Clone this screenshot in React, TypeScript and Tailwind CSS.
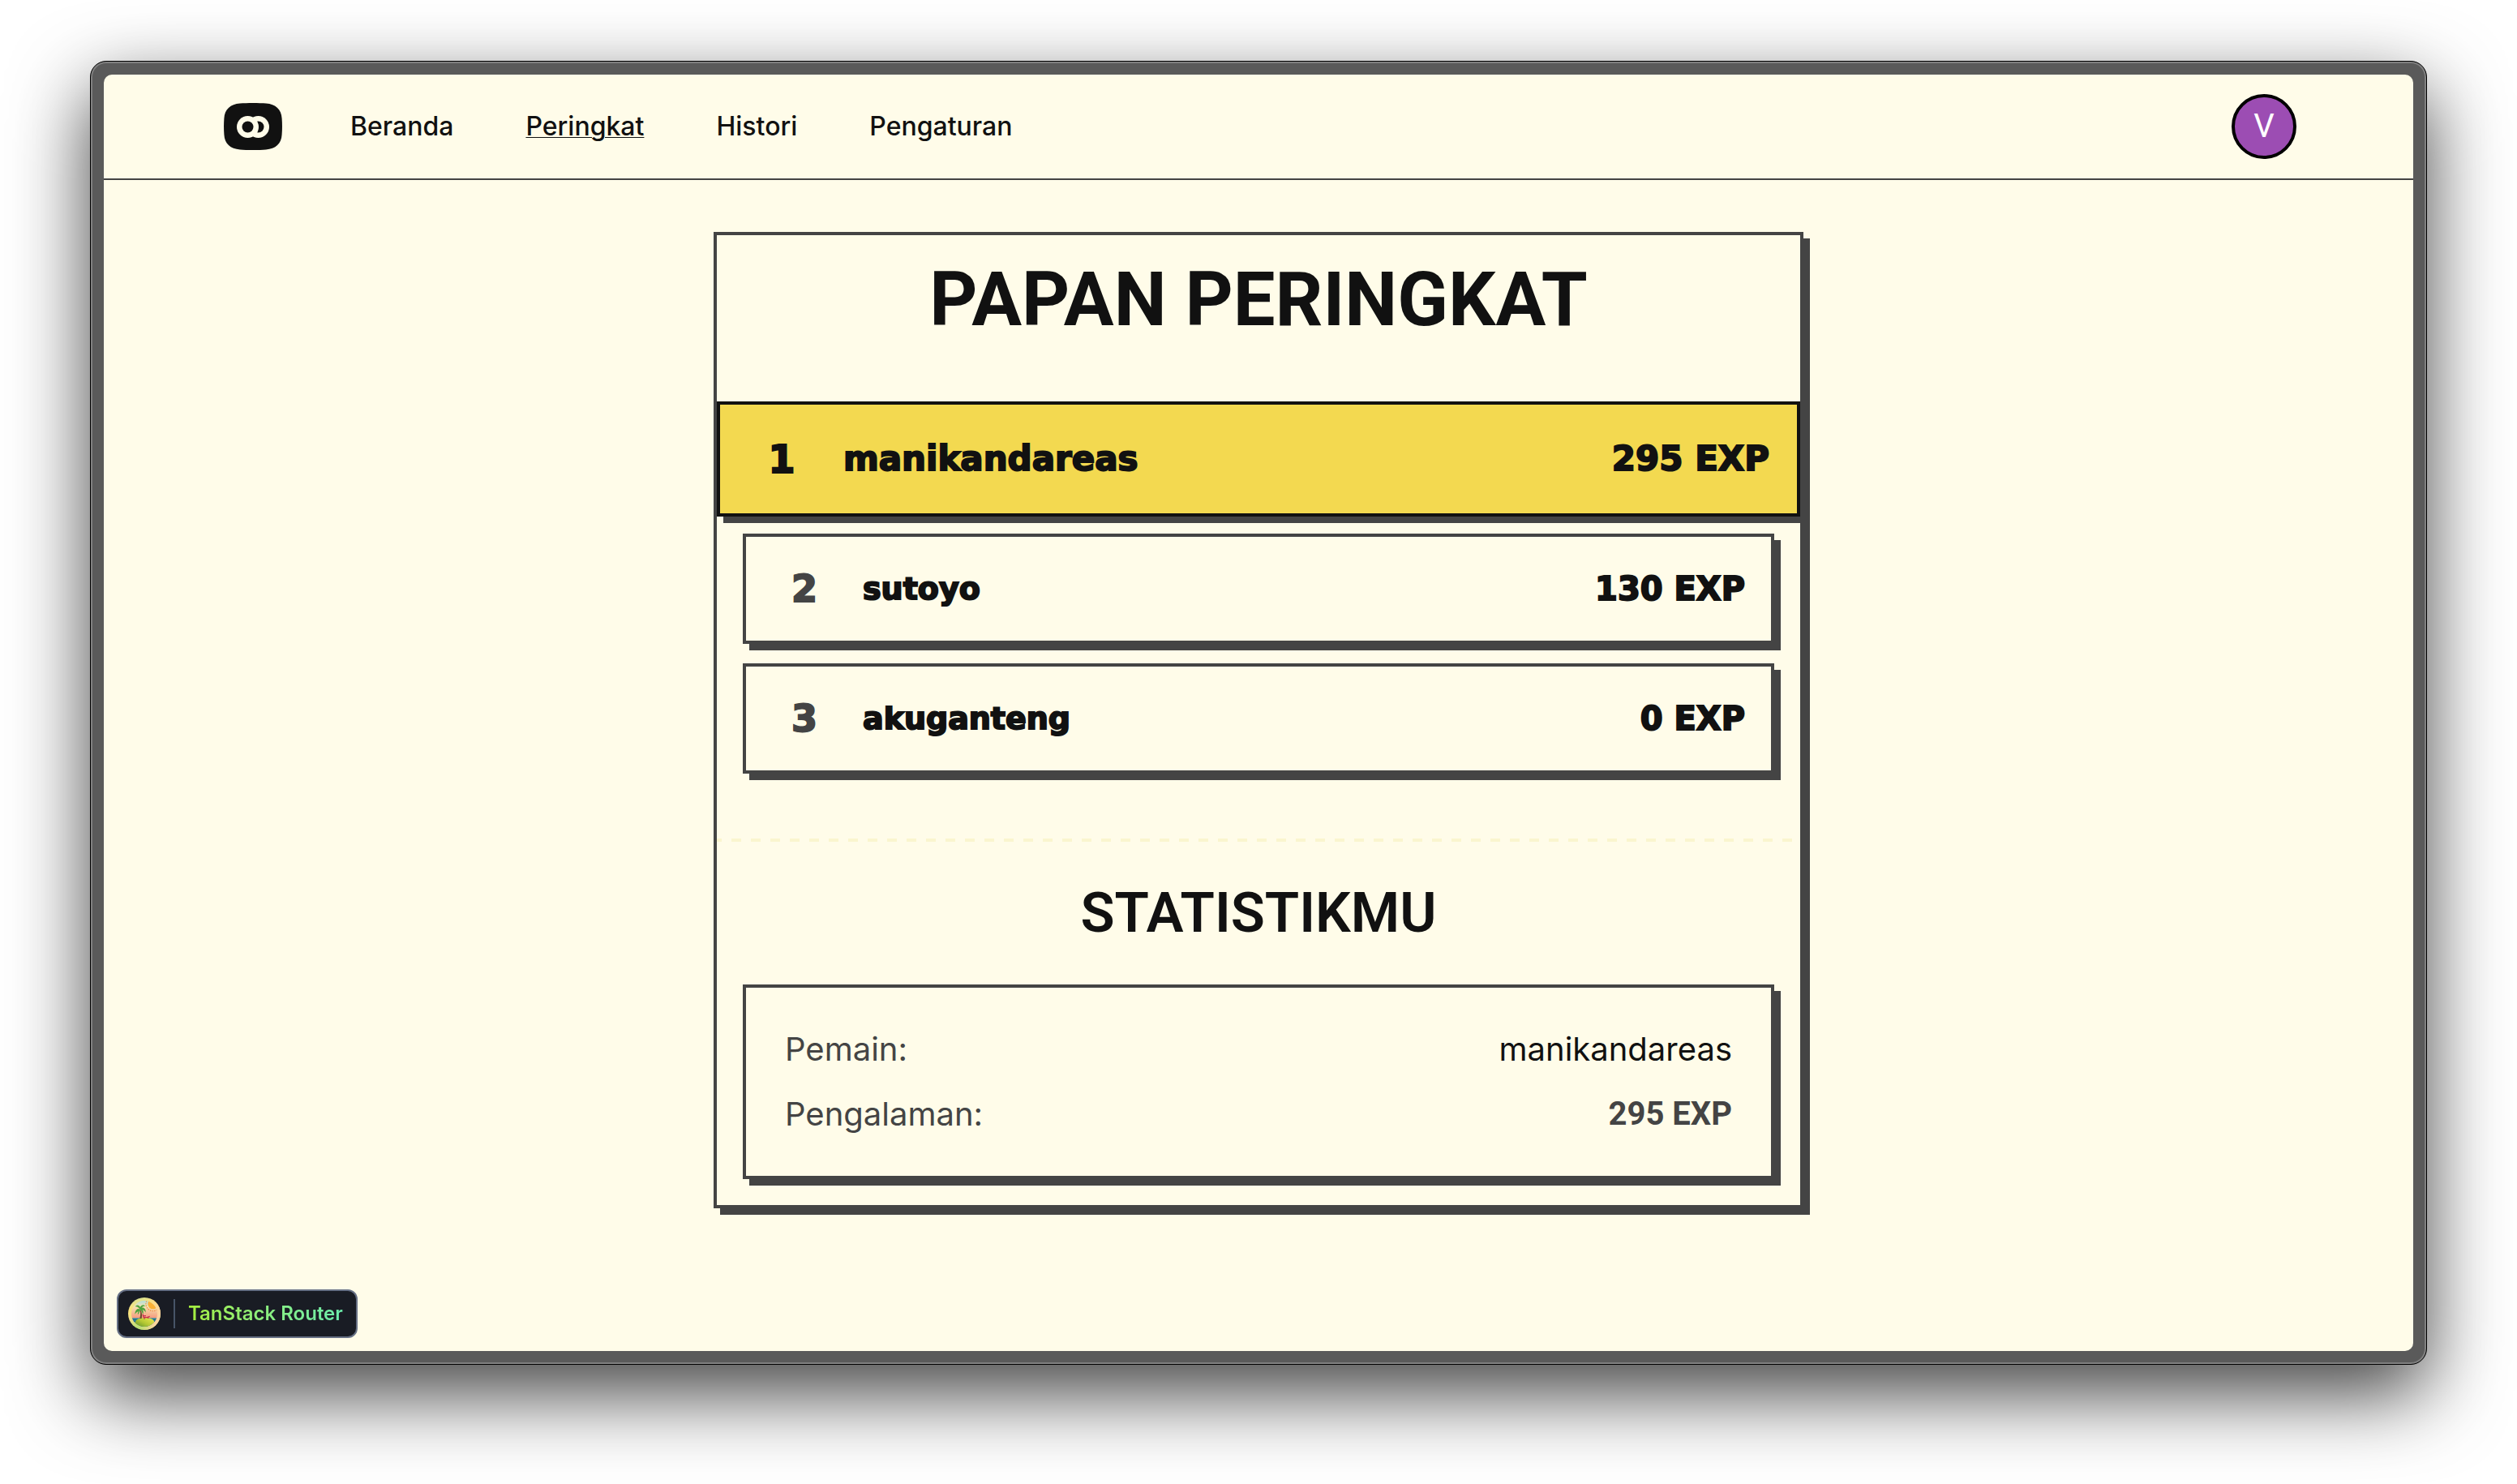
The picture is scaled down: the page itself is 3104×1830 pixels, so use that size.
import React from "react";

const links = [
  { label: "Beranda", active: false },
  { label: "Peringkat", active: true },
  { label: "Histori", active: false },
  { label: "Pengaturan", active: false },
];

const players = [
  { name: "manikandareas", exp: 295 },
  { name: "sutoyo", exp: 130 },
  { name: "akuganteng", exp: 0 },
];

function Logo() {
  return (
    <svg viewBox="0 0 72 58" className="h-[58px] w-[72px]" aria-hidden="true">
      <path
        d="M20 .6C28 -.2 44 -.2 52 .6C64 1.4 71 8 71.6 19C72.1 26 72.1 32 71.6 39C71 50 64 56.6 52 57.4C44 58.2 28 58.2 20 57.4C8 56.6 1 50 .4 39C-.1 32 -.1 26 .4 19C1 8 8 1.4 20 .6Z"
        fill="#111"
      />
      <circle cx="42.5" cy="29.5" r="13.5" fill="#fffce9" />
      <circle cx="42.5" cy="29.5" r="7" fill="#111" />
      <circle cx="29.5" cy="29.5" r="13.5" fill="#fffce9" />
      <circle cx="29.5" cy="29.5" r="7" fill="#111" />
    </svg>
  );
}

function Island() {
  return (
    <svg viewBox="0 0 120 120" className="size-10" aria-hidden="true">
      <defs>
        <linearGradient id="rim" x1="0" y1="0" x2="0.3" y2="1">
          <stop offset="0" stopColor="#c9e3a0" />
          <stop offset="0.35" stopColor="#fbe27a" />
          <stop offset="0.65" stopColor="#f0e088" />
          <stop offset="1" stopColor="#a6e06a" />
        </linearGradient>
        <linearGradient id="rimGlow" x1="0" y1="0" x2="1" y2="0.3">
          <stop offset="0.5" stopColor="#ffd98a" stopOpacity="0" />
          <stop offset="1" stopColor="#ffd3a0" />
        </linearGradient>
        <linearGradient id="sky" x1="0" y1="0" x2="0" y2="1">
          <stop offset="0" stopColor="#8fdcf0" />
          <stop offset="0.28" stopColor="#f4e3b0" />
          <stop offset="0.6" stopColor="#f6a182" />
          <stop offset="0.7" stopColor="#ef8a7c" />
        </linearGradient>
        <linearGradient id="land" x1="0" y1="1" x2="1" y2="0">
          <stop offset="0" stopColor="#4f8a2a" />
          <stop offset="0.5" stopColor="#b5c934" />
          <stop offset="1" stopColor="#f2ec52" />
        </linearGradient>
        <clipPath id="scene">
          <circle cx="60" cy="60" r="48" />
        </clipPath>
      </defs>
      <circle cx="60" cy="60" r="60" fill="url(#rim)" />
      <circle cx="60" cy="60" r="60" fill="url(#rimGlow)" />
      <g clipPath="url(#scene)">
        <rect width="120" height="120" fill="url(#sky)" />
        <circle cx="92" cy="24" r="19" fill="#fbb034" />
        <circle cx="92" cy="24" r="26" fill="none" stroke="#f58a3c" strokeWidth="4" strokeDasharray="4 4" />
        <rect y="76" width="120" height="44" fill="#2f8fa3" />
        <path d="M0 82H120M0 88H120" stroke="#1c5f7c" strokeWidth="3" />
        <ellipse cx="62" cy="94" rx="36" ry="20" fill="url(#land)" />
        <path d="M28 102C44 112 80 112 96 102L92 120H30Z" fill="#4f8a2a" />
        <path d="M45 44C52 54 52 66 50 78H43C46 66 47 56 43 46Z" fill="#6b4a2b" />
        <path
          d="M44 44C36 38 26 44 25 62C31 54 35 52 39 52C36 56 35 60 36 64C41 58 43 52 45 46C50 50 53 56 54 64C58 56 57 50 53 46C58 46 62 50 65 56C66 44 60 36 50 38C55 32 60 31 64 33C58 24 48 28 45 36C41 26 31 26 26 34C33 33 38 36 44 44Z"
          fill="#4fa33c"
        />
        <path d="M54 62L58 74H70L80 70M56 68H66M60 74V80M74 72V78" stroke="#c8314f" strokeWidth="4" fill="none" />
      </g>
    </svg>
  );
}

function PlayerRow({ rank, name, exp }: { rank: number; name: string; exp: number }) {
  if (rank === 1) {
    return (
      <li className="-mx-8 -my-[3px] flex items-center gap-[34px] border-4 border-[#111] bg-[#f3d950] px-[34px] py-[39px] font-['DejaVu_Sans',sans-serif] leading-[56px] font-black text-[#111] shadow-[8px_8px_0_#444] [-webkit-text-stroke:2px_currentColor]">
        <span className="w-[84px] text-center text-[48px]">{rank}</span>
        <span className="flex-1 text-[42px]">{name}</span>
        <span className="text-[42px]">{exp} EXP</span>
      </li>
    );
  }
  return (
    <li className="flex items-center gap-8 border-4 border-[#444] px-8 py-9 font-['DejaVu_Sans',sans-serif] leading-[56px] font-black text-[#111] shadow-[8px_8px_0_#444] [-webkit-text-stroke:2px_currentColor]">
      <span className="w-20 text-center text-[46px] text-[#444] [-webkit-text-stroke:2px_#444]">{rank}</span>
      <span className="flex-1 text-[38px]">{name}</span>
      <span className="text-[40px]">{exp} EXP</span>
    </li>
  );
}

export default function App() {
  return (
    <div className="flex min-h-screen flex-col bg-white px-[111px] pt-[75px] pb-[147px] font-['Inter',sans-serif]">
      <div className="flex flex-1 flex-col rounded-[20px] border border-black bg-[#5a5a5a] p-4 shadow-[inset_0_0_0_2px_#808080,0_36px_96px_rgba(0,0,0,0.74)]">
        <div className="flex flex-1 flex-col overflow-hidden rounded-[10px] bg-[#fffce9]">
          <header className="border-b-2 border-[#444]">
            <div className="flex h-32 items-center pr-36 pl-[148px]">
              <a href="#" aria-label="Beranda utama">
                <Logo />
              </a>
              <nav className="ml-[84px] flex flex-1 gap-[89px] text-[32px] font-medium text-[#111]">
                {links.map((l) => (
                  <a
                    key={l.label}
                    href="#"
                    className={l.active ? "underline decoration-1 underline-offset-2" : ""}
                  >
                    {l.label}
                  </a>
                ))}
              </nav>
              <button
                type="button"
                className="flex size-20 items-center justify-center rounded-full border-4 border-black bg-[#9c4db3] font-['Roboto',sans-serif] text-[40px] text-white"
              >
                V
              </button>
            </div>
          </header>

          <main className="mx-auto mt-16 w-full max-w-[1344px] border-4 border-[#444] shadow-[8px_8px_0_#444]">
            <h1 className="p-8 text-center font-['Roboto',sans-serif] text-[92px] leading-[96px] font-bold text-[#111]">
              PAPAN PERINGKAT
            </h1>
            <ol className="mt-12 flex flex-col gap-6 px-8">
              {players.map((p, i) => (
                <PlayerRow key={p.name} rank={i + 1} name={p.name} exp={p.exp} />
              ))}
            </ol>
            <div className="mt-20 h-1 bg-[repeating-linear-gradient(90deg,#faf5cf_0_6px,transparent_6px_18px,#faf5cf_18px_24px)]" />
            <section className="px-8 pt-12 pb-8">
              <h2 className="text-center font-['Roboto',sans-serif] text-[69px] leading-[80px] font-semibold text-[#111]">
                STATISTIKMU
              </h2>
              <dl className="mt-12 flex flex-col gap-6 border-4 border-[#444] p-12 text-[40px] leading-[56px] text-[#444] shadow-[8px_8px_0_#444]">
                <div className="flex justify-between">
                  <dt>Pemain:</dt>
                  <dd className="text-[#111]">manikandareas</dd>
                </div>
                <div className="flex justify-between">
                  <dt>Pengalaman:</dt>
                  <dd className="font-['Roboto',sans-serif] font-bold">295 EXP</dd>
                </div>
              </dl>
            </section>
          </main>

          <button
            type="button"
            className="mt-auto mb-4 ml-4 flex h-[60px] items-center gap-4 self-start rounded-xl border-2 border-[#667085] bg-[#191c24] pr-4 pl-3"
          >
            <Island />
            <span className="h-9 w-0.5 bg-[#475467]" />
            <span className="bg-linear-to-r from-[#a5ee3c] to-[#6bedab] bg-clip-text text-[24px] font-semibold text-transparent">
              TanStack Router
            </span>
          </button>
        </div>
      </div>
    </div>
  );
}
